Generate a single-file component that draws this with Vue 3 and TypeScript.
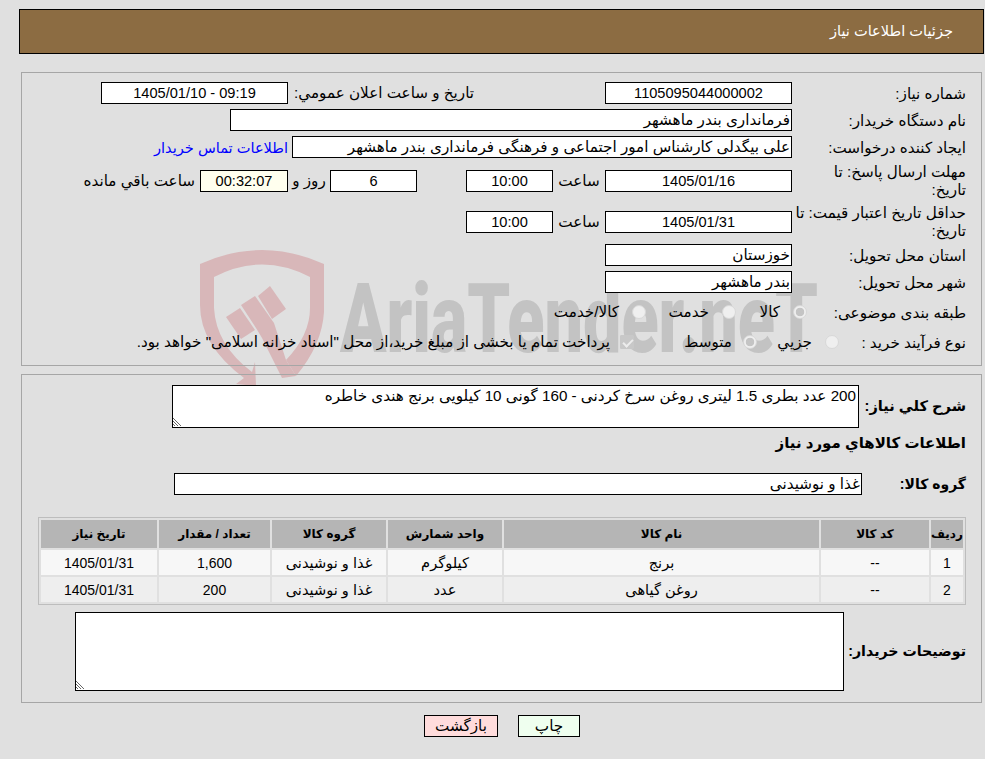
<script setup lang="ts">
interface Item { id: number; code: string; name: string; unit: string; group: string; qty: string; date: string }
const items: Item[] = [
  { id: 1, code: '--', name: 'برنج', unit: 'کیلوگرم', group: 'غذا و نوشیدنی', qty: '1,600', date: '1405/01/31' },
  { id: 2, code: '--', name: 'روغن گیاهی', unit: 'عدد', group: 'غذا و نوشیدنی', qty: '200', date: '1405/01/31' },
]
const description = '200 عدد بطری 1.5 لیتری روغن سرخ کردنی - 160 گونی 10 کیلویی برنج هندی خاطره'
</script>

<template>
  <div class="page" dir="rtl">
    <svg class="watermark" viewBox="0 0 985 759" width="985" height="759" aria-hidden="true">
      <g fill="#d8b7b9">
        <path d="M200 264 Q262 236 324 264 L324 312 Q322 345 296 376 L286 360 Q310 335 310 308 L310 277 Q262 252 214 277 L214 308 Q216 345 252 372 L255 362 L256 386 L236 384 L244 378 Q200 345 200 305 Z" />
        <path d="M226 317 L240 308 L255 330 L241 339 Z" />
        <path d="M241 305 L255 296 L274 323 L286 360 L296 376 L282 378 L262 338 L256 328 Z" />
        <path d="M258 296 L270 286 L286 309 L272 319 Z" />
      </g>
      <text x="340" y="352" class="wm-text" textLength="478" lengthAdjust="spacingAndGlyphs">AriaTender.neT</text>
    </svg>

    <div class="content">
      <header class="title-bar"><span>جزئیات اطلاعات نیاز</span></header>

      <section class="panel panel-top">
        <div class="row">
          <div class="label">شماره نیاز:</div>
          <div class="field center num w-date">1105095044000002</div>
          <div class="label-inline announce">تاریخ و ساعت اعلان عمومي:</div>
          <div class="field center num w-date">09:19 - 1405/01/10</div>
        </div>
        <div class="row">
          <div class="label">نام دستگاه خریدار:</div>
          <div class="field w-buyer">فرمانداری بندر ماهشهر</div>
        </div>
        <div class="row">
          <div class="label">ایجاد کننده درخواست:</div>
          <div class="field w-creator">علی بیگدلی کارشناس امور اجتماعی و فرهنگی فرمانداری بندر ماهشهر</div>
          <a class="contact">اطلاعات تماس خریدار</a>
        </div>
        <div class="row tall r4">
          <div class="label">مهلت ارسال پاسخ: تا<br />تاریخ:</div>
          <div class="field center num w-date">1405/01/16</div>
          <div class="unit">ساعت</div>
          <div class="field center num w-time">10:00</div>
          <div class="field center num w-time days">6</div>
          <div class="unit unit-day">روز و</div>
          <div class="field center num w-timer timer">00:32:07</div>
          <div class="remain">ساعت باقي مانده</div>
        </div>
        <div class="row tall r5">
          <div class="label">حداقل تاریخ اعتبار قیمت: تا<br />تاریخ:</div>
          <div class="field center num w-date">1405/01/31</div>
          <div class="unit">ساعت</div>
          <div class="field center num w-time">10:00</div>
        </div>
        <div class="row">
          <div class="label">استان محل تحویل:</div>
          <div class="field w-date">خوزستان</div>
        </div>
        <div class="row">
          <div class="label">شهر محل تحویل:</div>
          <div class="field w-date">بندر ماهشهر</div>
        </div>
        <div class="row choice r8">
          <div class="label l8">طبقه بندی موضوعی:</div>
          <label class="opt o1"><input type="radio" name="cat" checked disabled /><span>کالا</span></label>
          <label class="opt o2"><input type="radio" name="cat" disabled /><span>خدمت</span></label>
          <label class="opt"><input type="radio" name="cat" disabled /><span>کالا/خدمت</span></label>
        </div>
        <div class="row choice r9">
          <div class="label l9">نوع فرآیند خرید :</div>
          <label class="opt o3"><input type="radio" name="proc" disabled /><span>جزیي</span></label>
          <label class="opt o4"><input type="radio" name="proc" checked disabled /><span>متوسط</span></label>
          <label class="opt o5"><input type="checkbox" checked disabled /><span>پرداخت تمام یا بخشی از مبلغ خرید،از محل "اسناد خزانه اسلامی" خواهد بود.</span></label>
        </div>
      </section>

      <section class="panel panel-bottom">
        <div class="row desc">
          <div class="label strong ldesc">شرح کلي نیاز:</div>
          <div class="area-wrap">
            <textarea class="area a-desc" readonly :value="description"></textarea>
            <svg class="grip" viewBox="0 0 10 10" width="10" height="10" aria-hidden="true">
              <path d="M0 1 L8 9 M0 4 L5 9 M0 7 L2 9" stroke="#666" stroke-width="1" fill="none" />
            </svg>
          </div>
        </div>
        <div class="heading">اطلاعات کالاهاي مورد نیاز</div>
        <div class="row group">
          <div class="label strong lgroup">گروه کالا:</div>
          <div class="field w-group">غذا و نوشیدنی</div>
        </div>
        <table class="items">
          <thead>
            <tr>
              <th class="c-id">ردیف</th>
              <th class="c-code">کد کالا</th>
              <th class="c-name">نام کالا</th>
              <th class="c-unit">واحد شمارش</th>
              <th class="c-group">گروه کالا</th>
              <th class="c-qty">تعداد / مقدار</th>
              <th>تاریخ نیاز</th>
            </tr>
          </thead>
          <tbody>
            <tr v-for="it in items" :key="it.id">
              <td>{{ it.id }}</td>
              <td>{{ it.code }}</td>
              <td class="ar">{{ it.name }}</td>
              <td class="ar">{{ it.unit }}</td>
              <td class="ar">{{ it.group }}</td>
              <td>{{ it.qty }}</td>
              <td>{{ it.date }}</td>
            </tr>
          </tbody>
        </table>
        <div class="row notes">
          <div class="label strong lnotes">توضیحات خریدار:</div>
          <div class="area-wrap">
            <textarea class="area a-notes" readonly></textarea>
            <svg class="grip" viewBox="0 0 10 10" width="10" height="10" aria-hidden="true">
              <path d="M0 1 L8 9 M0 4 L5 9 M0 7 L2 9" stroke="#666" stroke-width="1" fill="none" />
            </svg>
          </div>
        </div>
      </section>

      <div class="actions">
        <button class="btn print" type="button">چاپ</button>
        <button class="btn back" type="button">بازگشت</button>
      </div>
    </div>
  </div>
</template>

<style>
html, body { margin: 0; background: #e0e0e0; }
</style>

<style scoped>
* { box-sizing: border-box; }
.page {
  position: relative;
  width: 985px;
  height: 759px;
  overflow: hidden;
  background: #e0e0e0;
  color: #000;
  font-family: "Liberation Sans", "DejaVu Sans", sans-serif;
  font-size: 15.2px;
}
.watermark { position: absolute; left: 0; top: 0; direction: ltr; }
.wm-text { font-family: Roboto, sans-serif; font-weight: 900; font-size: 96px; fill: #c3c3c3; }
.content { position: relative; padding-top: 9px; }
.title-bar {
  height: 45px;
  width: 965px;
  margin-right: 1px;
  background: #8c6c42;
  border: 1px solid #000;
  color: #fff;
  display: flex;
  align-items: center;
  padding: 0 30px 2px 0;
  font-size: 14.6px;
}
.panel {
  margin: 0 3px 0 0;
  width: 961px;
  border: 1px solid #a6a6a6;
  padding-right: 15px;
}
.panel-top { margin-top: 18px; height: 294px; padding-top: 9px; }
.panel-bottom { margin-top: 8px; height: 329px; padding-top: 10px; }
.row { display: flex; align-items: center; margin-bottom: 5px; min-height: 22px; }
.label { width: 174px; flex: none; line-height: 17px; }
.tall .label { line-height: 18px; }
.field {
  height: 22px;
  flex: none;
  background: #fff;
  border: 1px solid #000;
  line-height: 20px;
  padding: 0 1px;
  white-space: nowrap;
  overflow: hidden;
}
.center { text-align: center; }
.num { font-size: 14.6px; }
.w-date { width: 187px; }
.w-time { width: 87px; }
.w-timer { width: 88px; }
.w-buyer { width: 562px; }
.w-creator { width: 500px; }
.w-group { width: 688px; }
.announce { width: 181px; margin: 0 131px 0 5px; white-space: nowrap; }
.contact { color: #0000ff; margin-right: 4px; white-space: nowrap; font-size: 14.6px; }
.unit { width: 42px; margin: 0 5px; flex: none; text-align: center; white-space: nowrap; }
.unit-day { margin: 0; }
.days { margin-right: 49px; }
.timer { background: #ffffee; }
.remain { margin-right: 5px; white-space: nowrap; }
.tall { height: 34px; }
.r4 { margin-top: 6px; margin-bottom: 7px; }
.r8 { margin-top: 7px; height: 24px; margin-bottom: 6px; }
.r9 { height: 24px; margin-bottom: 0; }
.l8 { width: 159px; }
.l9 { width: 127px; }
.opt { display: flex; align-items: center; gap: 13px; white-space: nowrap; flex: none; }
.o1 { width: 71px; }
.o2 { width: 90px; }
.o3 { width: 82px; }
.o4 { width: 123px; gap: 11px; }
.o5 { gap: 10px; }
.opt input {
  appearance: none;
  margin: 0;
  width: 14px;
  height: 14px;
  flex: none;
  border-radius: 50%;
  background: #efefef;
  border: 1px solid #d8d8d8;
  position: relative;
}
.opt input[type="radio"]:checked {
  background: radial-gradient(circle, #c4c4c4 0 4px, #efefef 4.6px);
}
.opt input[type="checkbox"] {
  border-radius: 1px;
  background: #c8c8c8;
  border-color: #c8c8c8;
}
.opt input[type="checkbox"]::after {
  content: "";
  position: absolute;
  left: 3.5px;
  top: 0.5px;
  width: 4px;
  height: 8px;
  border: solid #ececec;
  border-width: 0 2px 2px 0;
  transform: rotate(45deg);
}
.strong { font-weight: 700; font-size: 14.6px; white-space: nowrap; }
.ldesc { width: 107px; }
.lgroup { width: 104px; font-size: 14px; }
.lnotes { width: 122px; font-size: 14.2px; }
.area-wrap { position: relative; flex: none; line-height: 0; }
.grip { position: absolute; left: 1px; bottom: 1px; }
.area {
  display: block;
  background: #fff;
  border: 1px solid #000;
  border-radius: 0;
  padding: 1px 2px;
  margin: 0;
  font: inherit;
  line-height: 17px;
  color: #000;
  outline: none;
  direction: rtl;
  resize: none;
}
.a-desc { width: 687px; height: 43px; }
.a-notes { width: 769px; height: 79px; }
.desc { margin-bottom: 0; }
.heading { font-weight: 700; font-size: 15px; height: 20px; line-height: 20px; margin: 5px 0 0; }
.group { margin: 20px 0 0; }
.items {
  margin: 22px 0 0;
  width: 928px;
  height: 88px;
  table-layout: fixed;
  border-collapse: separate;
  border-spacing: 2px;
  border: 1px solid #bdbdbd;
  font-size: 14px;
}
.items th {
  background: #b5b5b5;
  height: 28px;
  font-weight: 700;
  font-size: 12px;
  padding: 0;
}
.items td { height: 25px; text-align: center; padding: 0; }
.items td.ar { font-size: 14.6px; }
.items tbody tr:nth-child(1) td { background: #f7f7f7; }
.items tbody tr:nth-child(2) td { background: #eeeeee; }
.c-id { width: 32px; }
.c-code { width: 108px; }
.c-name { width: 315px; }
.c-unit { width: 114px; }
.c-group { width: 114px; }
.c-qty { width: 111px; }
.notes { margin: 7px 0 0; }
.actions { display: flex; gap: 20px; padding-right: 405px; margin-top: 12px; }
.btn {
  height: 22px;
  border: 1px solid #000;
  border-radius: 0;
  padding: 0;
  font: inherit;
  color: #000;
}
.print { width: 62px; background: #efffef; }
.back { width: 74px; background: #ffdcdc; }
</style>
